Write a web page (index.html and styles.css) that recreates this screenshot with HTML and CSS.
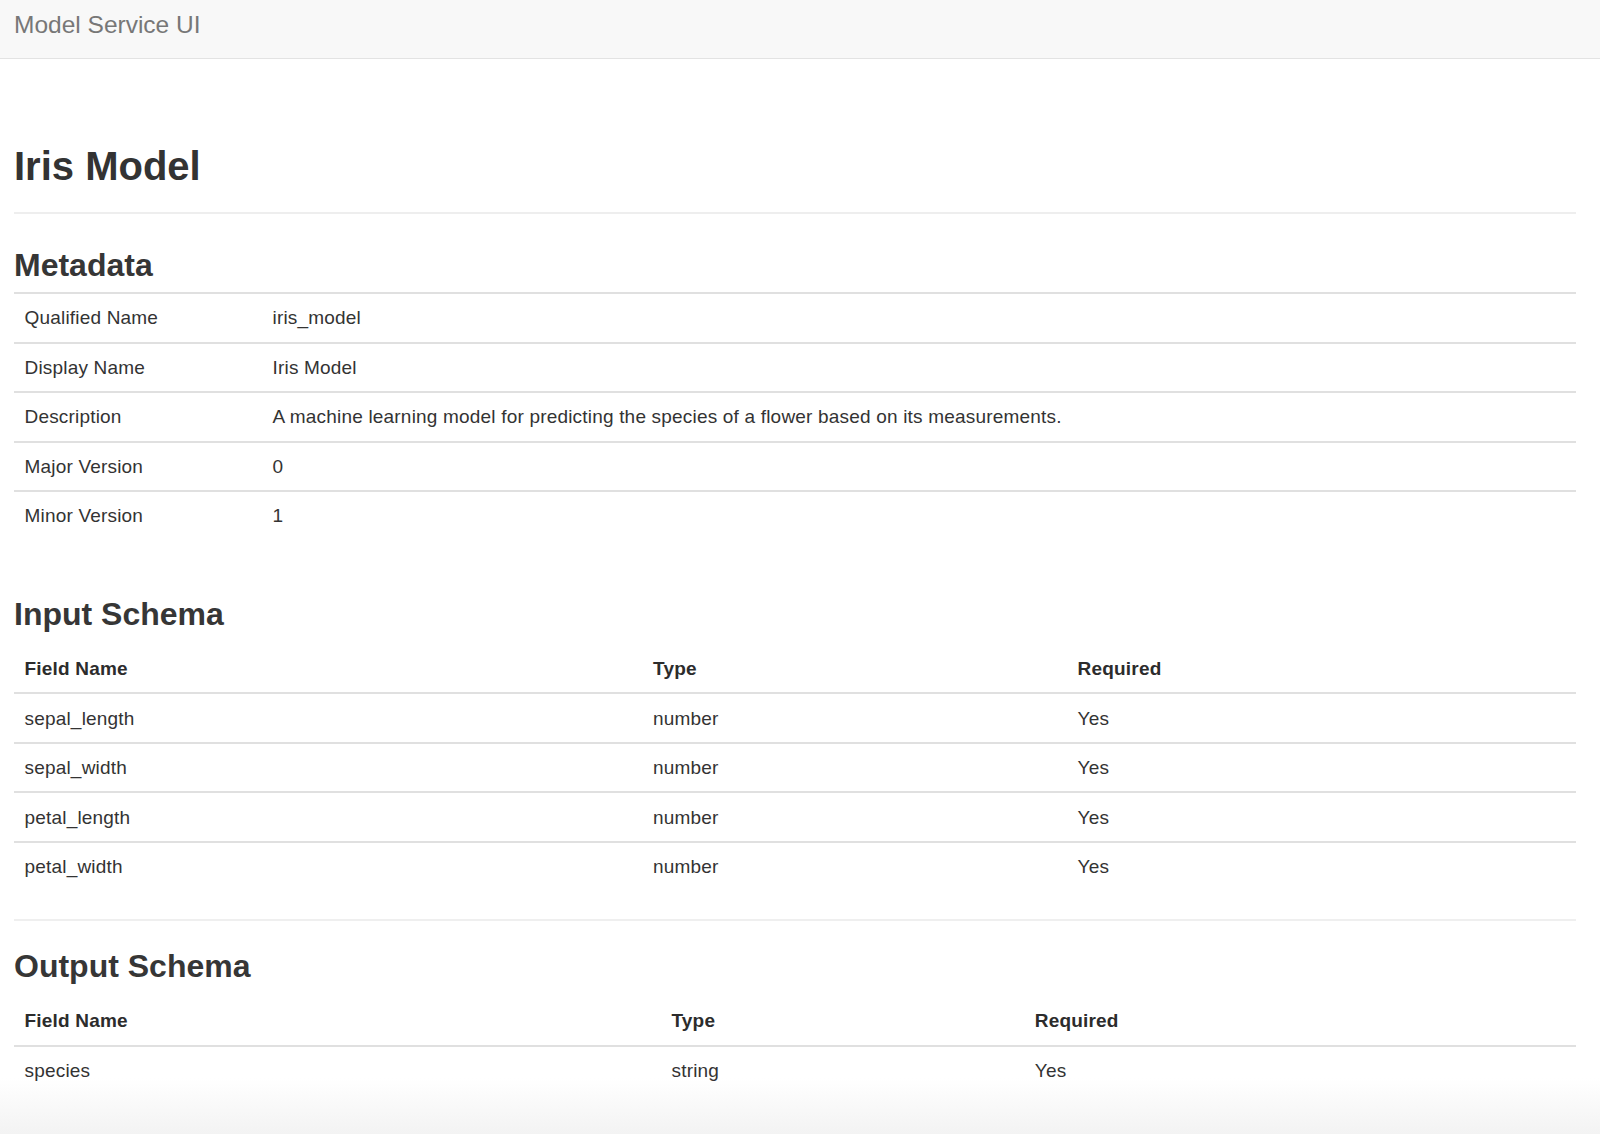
FILE: index.html
```html
<!DOCTYPE html>
<html lang="en">
<head>
<meta charset="utf-8">
<title>Model Service UI</title>
<link rel="stylesheet" href="styles.css">
</head>
<body>
<header class="navbar">
  <span class="brand">Model Service UI</span>
</header>
<main class="container">
  <div class="page-header">
    <h1 class="title">Iris Model</h1>
  </div>

  <section class="section section-meta">
    <h2 class="section-title">Metadata</h2>
    <table class="table table-meta">
      <tbody>
        <tr><td class="col-key">Qualified Name</td><td>iris_model</td></tr>
        <tr><td class="col-key">Display Name</td><td>Iris Model</td></tr>
        <tr><td class="col-key">Description</td><td>A machine learning model for predicting the species of a flower based on its measurements.</td></tr>
        <tr><td class="col-key">Major Version</td><td>0</td></tr>
        <tr><td class="col-key">Minor Version</td><td>1</td></tr>
      </tbody>
    </table>
  </section>

  <section class="section section-input">
    <h2 class="section-title section-title-schema">Input Schema</h2>
    <table class="table table-schema table-input">
      <thead>
        <tr><th class="col-name">Field Name</th><th class="col-type">Type</th><th>Required</th></tr>
      </thead>
      <tbody>
        <tr><td>sepal_length</td><td>number</td><td>Yes</td></tr>
        <tr><td>sepal_width</td><td>number</td><td>Yes</td></tr>
        <tr><td>petal_length</td><td>number</td><td>Yes</td></tr>
        <tr><td>petal_width</td><td>number</td><td>Yes</td></tr>
      </tbody>
    </table>
  </section>

  <hr class="divider">

  <section class="section section-output">
    <h2 class="section-title section-title-schema">Output Schema</h2>
    <table class="table table-schema table-output">
      <thead>
        <tr><th class="col-name">Field Name</th><th class="col-type">Type</th><th>Required</th></tr>
      </thead>
      <tbody>
        <tr><td>species</td><td>string</td><td>Yes</td></tr>
      </tbody>
    </table>
  </section>
</main>
</body>
</html>
```

FILE: styles.css
```css
* {
  box-sizing: border-box;
}

html {
  background: #ffffff;
}

body {
  margin: 0;
  min-height: 100vh;
  font-family: "Liberation Sans", Arial, Helvetica, sans-serif;
  font-size: 19px;
  line-height: 27px;
  color: #333333;
  background: linear-gradient(to bottom, #ffffff calc(100vh - 56px), #f3f3f3 100vh) no-repeat;
}

/* Navbar */
.navbar {
  height: 59px;
  background: #f8f8f8;
  border-bottom: 1px solid #e3e3e3;
  padding: 11px 14px 0;
}

.brand {
  display: block;
  font-size: 24.5px;
  line-height: normal;
  color: #777777;
}

/* Content */
.container {
  padding: 0 24px 0 14px;
}

.page-header {
  padding-bottom: 23.9px;
  border-bottom: 2px solid #eeeeee;
}

.title {
  margin: 85.1px 0 0;
  font-size: 40px;
  line-height: 44px;
  font-weight: 700;
  color: #333333;
}

.section-title {
  margin: 0 0 9px;
  font-size: 32px;
  line-height: 35px;
  font-weight: 700;
  color: #363636;
}

.section-title-schema {
  margin-bottom: 12.65px;
}

.section-meta {
  padding-top: 34.15px;
}

.section-input {
  padding-top: 57.65px;
}

.section-output {
  padding-top: 28.15px;
}

.divider {
  margin: 28.85px 0 0;
  border: 0;
  border-top: 2px solid #efefef;
  height: 0;
}

/* Tables */
.table {
  width: 100%;
  border-collapse: separate;
  border-spacing: 0;
  table-layout: fixed;
}

.table td,
.table th {
  padding: 10.25px 10.5px;
  line-height: 27px;
  letter-spacing: 0.19px;
  text-align: left;
  vertical-align: top;
}

.table th {
  font-weight: 700;
  color: #2c2c2c;
}

.table-meta td {
  border-top: 2px solid #e0e0e0;
}

.table-meta .col-key {
  width: 15.88%;
}

.table-schema thead th {
  border-bottom: 2px solid #e0e0e0;
}

.table-schema tbody tr + tr td {
  border-top: 2px solid #e0e0e0;
}

.table-input .col-name {
  width: 40.24%;
}

.table-input .col-type {
  width: 27.18%;
}

.table-output .col-name {
  width: 41.42%;
}

.table-output .col-type {
  width: 23.26%;
}
```
